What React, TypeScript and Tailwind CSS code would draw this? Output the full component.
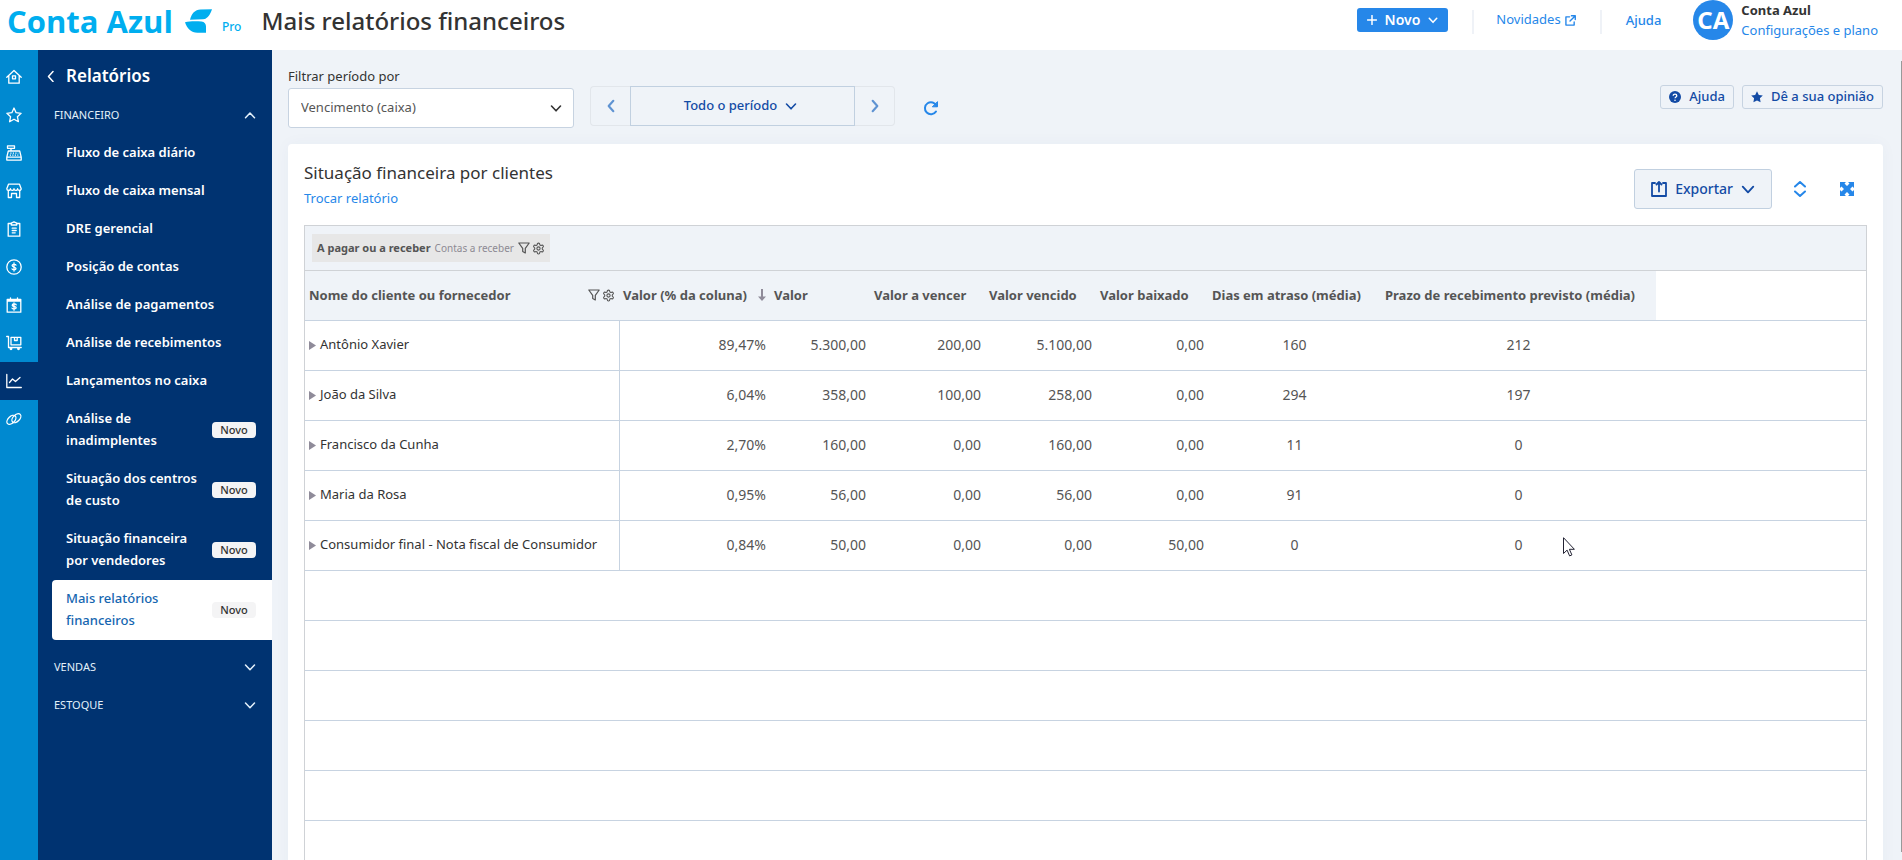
import type { ReactNode } from "react";
import { clsx } from "clsx";

const sections = ["VENDAS", "ESTOQUE"];

const reports = [
  { label: "Fluxo de caixa diário" },
  { label: "Fluxo de caixa mensal" },
  { label: "DRE gerencial" },
  { label: "Posição de contas" },
  { label: "Análise de pagamentos" },
  { label: "Análise de recebimentos" },
  { label: "Lançamentos no caixa" },
  { label: "Análise de inadimplentes", isNew: true },
  { label: "Situação dos centros de custo", isNew: true },
  { label: "Situação financeira por vendedores", isNew: true },
  { label: "Mais relatórios financeiros", isNew: true, active: true },
];

const rows = [
  ["Antônio Xavier", "89,47%", "5.300,00", "200,00", "5.100,00", "0,00", "160", "212"],
  ["João da Silva", "6,04%", "358,00", "100,00", "258,00", "0,00", "294", "197"],
  ["Francisco da Cunha", "2,70%", "160,00", "0,00", "160,00", "0,00", "11", "0"],
  ["Maria da Rosa", "0,95%", "56,00", "0,00", "56,00", "0,00", "91", "0"],
  ["Consumidor final - Nota fiscal de Consumidor", "0,84%", "50,00", "0,00", "0,00", "50,00", "0", "0"],
];

type IconProps = { children: ReactNode; size?: number; width?: number; box?: number };

function Icon({ children, size = 16, width = 1.5, box = 16 }: IconProps) {
  return (
    <svg
      width={size}
      height={size}
      viewBox={`0 0 ${box} ${box}`}
      fill="none"
      stroke="currentColor"
      strokeWidth={width}
      strokeLinecap="round"
      strokeLinejoin="round"
      className="shrink-0"
      aria-hidden="true"
    >
      {children}
    </svg>
  );
}

const ChevronDown = ({ size = 12, width = 1.5 }: { size?: number; width?: number }) => (
  <Icon size={size} box={12} width={width}>
    <path d="M1.5 4 6 8.8 10.5 4" />
  </Icon>
);

const Funnel = () => (
  <Icon size={12} box={12} width={1.2}>
    <path d="M.8 1h10.4L7.3 6.3V11L4.7 9.5V6.3z" />
  </Icon>
);

const Gear = () => (
  <Icon size={13} box={24} width={2}>
    <path d="M12.22 2h-.44a2 2 0 0 0-2 2v.18a2 2 0 0 1-1 1.73l-.43.25a2 2 0 0 1-2 0l-.15-.08a2 2 0 0 0-2.73.73l-.22.38a2 2 0 0 0 .73 2.73l.15.1a2 2 0 0 1 1 1.72v.51a2 2 0 0 1-1 1.74l-.15.09a2 2 0 0 0-.73 2.73l.22.38a2 2 0 0 0 2.73.73l.15-.08a2 2 0 0 1 2 0l.43.25a2 2 0 0 1 1 1.73V20a2 2 0 0 0 2 2h.44a2 2 0 0 0 2-2v-.18a2 2 0 0 1 1-1.73l.43-.25a2 2 0 0 1 2 0l.15.08a2 2 0 0 0 2.73-.73l.22-.39a2 2 0 0 0-.73-2.73l-.15-.08a2 2 0 0 1-1-1.74v-.5a2 2 0 0 1 1-1.74l.15-.09a2 2 0 0 0 .73-2.73l-.22-.38a2 2 0 0 0-2.73-.73l-.15.08a2 2 0 0 1-2 0l-.43-.25a2 2 0 0 1-1-1.73V4a2 2 0 0 0-2-2z" />
    <circle cx="12" cy="12" r="3" />
  </Icon>
);

const railItems: { label: string; active?: boolean; icon: ReactNode }[] = [
  {
    label: "Início",
    icon: (
      <>
        <path d="M.8 8.2 8 1.5l7.2 6.7M2.8 6.8v7.4h10.4V6.8" />
        <rect x="6.5" y="6.8" width="3" height="3" />
      </>
    ),
  },
  { label: "Favoritos", icon: <path d="M8 1l2.1 4.7 5 .6-3.7 3.4 1 5L8 12.2l-4.4 2.5 1-5L.9 6.300l5-.6z" /> },
  {
    label: "Vendas",
    icon: (
      <>
        <path d="M1.5.8h7v2.5h-7zM5 3.3V6M2.3 6h11.4l1.5 6.2v2.9H.8v-2.9zM.8 12.2h14.4" />
        <path d="M4.3 8.2h8M3.8 10.2h8.5" strokeDasharray="1.2 1.3" strokeLinecap="butt" />
      </>
    ),
  },
  {
    label: "Compras",
    icon: (
      <>
        <path d="M2.5 1.2h11l1.7 4.5c0 2.200-3.600 2.200-3.600 0 0 2.200-3.600 2.200-3.600 0 0 2.200-3.600 2.200-3.600 0 0 2.200-3.600 2.200-3.600 0z" />
        <path d="M2.3 7.5v7h3.2v-4h5v4h3.2v-7" />
      </>
    ),
  },
  {
    label: "Cadastros",
    icon: (
      <>
        <path d="M5 2.5H2.2v12.7h11.6V2.5H11" />
        <path d="M5.3 4V2.2L8 .8l2.7 1.4V4zM6.2 7.2h4M6.2 9.5h4M6.2 11.8h3" />
      </>
    ),
  },
  {
    label: "Financeiro",
    icon: (
      <>
        <circle cx="8" cy="8" r="7.2" />
        <path d="M10 6.2c-.3-1.2-3.9-1.3-3.9.4S10 7.8 10 9.500s-3.700 1.500-4 .3M8 4v8" />
      </>
    ),
  },
  {
    label: "Cobranças",
    icon: (
      <>
        <path d="M1.2 2.5h13.6v12.7H1.2zM1.2 4h13.6M4.5.8v3M11.5.8v3" />
        <path d="M10.2 7.8c-.3-1.2-4-1.2-4 .4s4 1 4 2.600-3.900 1.400-4.200.3M8 6v7.2" />
      </>
    ),
  },
  {
    label: "Estoque",
    icon: (
      <>
        <path d="M.7 1.5h1.800v11h12.700" />
        <path d="M5 2.3h9.8v7.5H5zM8.5 2.3v3.2h2.7V2.3" />
        <circle cx="5" cy="13.7" r=".8" />
        <circle cx="12.5" cy="13.7" r=".8" />
      </>
    ),
  },
  { label: "Relatórios", active: true, icon: <path d="M.8 1.5v13h14.5M3.5 9.5 6.5 6l3 2.5L14 4.5" /> },
  {
    label: "Integrações",
    icon: (
      <>
        <ellipse cx="5.4" cy="8.8" rx="5.4" ry="3.3" transform="rotate(-45 5.4 8.8)" />
        <ellipse cx="10.4" cy="7.2" rx="5.4" ry="3.3" transform="rotate(-45 10.4 7.2)" />
      </>
    ),
  },
];

function TopBar() {
  return (
    <header className="flex h-[50px] items-start bg-white">
      <a href="#" className="flex items-start pl-[7px] pt-[3px] text-[#00aeef]">
        <span className="font-['Open_Sans'] text-[31px] font-bold leading-9">Conta Azul</span>
        <svg width="27" height="24" viewBox="0 0 27 24" className="ml-3 mt-1.5" fill="currentColor" aria-hidden="true">
          <path d="M5 10.7C6.5 4.5 10 .5 15.5.4L27 .2C25.5 5 22.5 9.8 18 10.3z" />
          <path d="M0 13.3C5 11.9 12 12.3 16.5 12.5c3 .3 4.5 2.5 4.5 5v6.2h-8.5C6 23.7 2 19.5 0 13.3z" />
        </svg>
        <span className="ml-2.5 mt-4 text-xs font-medium leading-4">Pro</span>
      </a>
      <h1 className="ml-5 mt-[3px] text-2xl font-medium leading-9 text-[#333]">Mais relatórios financeiros</h1>
      <div className="ml-auto flex items-start pr-6">
        <button className="mt-2 flex h-6 items-center gap-2 rounded-[3px] bg-[#2687e9] px-2.5 text-sm font-semibold text-white">
          <Icon size={10} box={10}>
            <path d="M5 .5v9M.5 5h9" />
          </Icon>
          Novo
          <ChevronDown size={10} width={1.8} />
        </button>
        <span className="ml-6 mt-2.5 h-6 w-0.5 bg-[#eff2f7]" />
        <a href="#" className="ml-[22px] mt-2 flex h-6 items-center gap-1 text-[13px] text-[#2687e9]">
          Novidades
          <Icon size={11} box={12}>
            <path d="M5 2H1v9h9V7.5M7 .8h4.2V5M11 1 5.5 6.5" />
          </Icon>
        </a>
        <span className="ml-6 mt-2.5 h-6 w-0.5 bg-[#eff2f7]" />
        <a href="#" className="ml-6 mt-2 text-[13px] font-medium leading-6 text-[#2687e9]">Ajuda</a>
        <span className="ml-8 flex size-10 items-center justify-center rounded-full bg-[#2687e9] text-2xl font-bold text-white">CA</span>
        <div className="ml-2 flex flex-col text-[13px] leading-5">
          <strong className="font-bold text-[#333]">Conta Azul</strong>
          <a href="#" className="text-[#2687e9]">Configurações e plano</a>
        </div>
      </div>
    </header>
  );
}

function Rail() {
  return (
    <nav aria-label="Principal" className="w-[38px] shrink-0 bg-[#0089d0] pt-2 text-white">
      {railItems.map((item) => (
        <a
          key={item.label}
          href="#"
          aria-label={item.label}
          className={clsx("flex h-[38px] items-center pl-1.5", item.active && "bg-[#003371]")}
        >
          <Icon width={1.3}>{item.icon}</Icon>
        </a>
      ))}
    </nav>
  );
}

function Sidebar() {
  return (
    <nav aria-label="Relatórios" className="w-[234px] shrink-0 bg-[#003371] pt-2 text-white">
      <a href="#" className="flex h-[38px] items-center gap-2 pb-0.5 pl-2 text-[17px] font-semibold">
        <Icon size={12} box={12}>
          <path d="M7 1.5 2.5 6.5 7 11.5" />
        </Icon>
        Relatórios
      </a>
      <button className="flex h-[38px] w-full items-center justify-between px-4 text-[11px] text-[#e3f1fb]">
        FINANCEIRO
        <Icon size={12} box={12}>
          <path d="M1.5 8.8 6 4l4.5 4.8" />
        </Icon>
      </button>
      <ul className="mb-2">
        {reports.map((report) => (
          <li key={report.label}>
            <a
              href="#"
              className={clsx(
                "ml-3.5 flex items-center justify-between rounded-l pl-3.5 pr-4 text-[13px] leading-[22px]",
                report.isNew ? "h-[60px]" : "h-[38px]",
                report.active ? "bg-white font-medium text-[#1566b0]" : "font-semibold"
              )}
            >
              <span className={clsx("pb-0.5", report.isNew && "w-[136px]")}>{report.label}</span>
              {report.isNew && (
                <span className="flex h-4 w-11 items-center justify-center rounded bg-[#f4f4f5] text-[11px] font-medium text-[#333]">
                  Novo
                </span>
              )}
            </a>
          </li>
        ))}
      </ul>
      {sections.map((section) => (
        <button key={section} className="flex h-[38px] w-full items-center justify-between px-4 text-[11px] text-[#e3f1fb]">
          {section}
          <ChevronDown />
        </button>
      ))}
    </nav>
  );
}

function Filters() {
  return (
    <div className="flex items-start">
      <div className="flex flex-col">
        <label htmlFor="period-type" className="pb-0.5 text-[13px] leading-5 text-[#333]">Filtrar período por</label>
        <div className="relative">
          <select
            id="period-type"
            className="h-10 w-[286px] appearance-none rounded-[3px] border border-[#c7d3e1] bg-white px-3 text-[13px] text-[#555]"
          >
            <option>Vencimento (caixa)</option>
          </select>
          <span className="pointer-events-none absolute right-3 top-3.5 text-[#333]">
            <ChevronDown width={1.6} />
          </span>
        </div>
      </div>
      <div className="ml-4 mt-5 flex h-10 text-[#134ba5]">
        <button aria-label="Período anterior" className="flex w-10 items-center justify-center rounded-l border border-r-0 border-[#e2e6eb] text-[#5f93d2]">
          <Icon size={14} box={12} width={1.8}>
            <path d="M8 1.5 4 6l4 4.5" />
          </Icon>
        </button>
        <button className="flex w-[225px] items-center justify-center gap-2 border border-[#c1d0e0] pr-1 text-[13px] font-medium">
          Todo o período
          <ChevronDown width={1.6} />
        </button>
        <button aria-label="Próximo período" className="flex w-10 items-center justify-center rounded-r border border-l-0 border-[#e2e6eb] text-[#5f93d2]">
          <Icon size={14} box={12} width={1.8}>
            <path d="M4 1.5 8 6l-4 4.5" />
          </Icon>
        </button>
      </div>
      <button aria-label="Atualizar" className="ml-7 mt-[34px] text-[#2687e9]">
        <Icon width={2}>
          <path d="M13.5 6A6 6 0 1 0 13 11.5" />
          <path d="M14.5 2v4.8H9.7z" fill="currentColor" strokeWidth="1" />
        </Icon>
      </button>
      <div className="ml-auto mt-[19px] flex gap-2 text-[13px] font-medium text-[#134ba5]">
        <button className="flex h-6 items-center gap-2 rounded-[3px] border border-[#c7d3e1] px-2">
          <svg width="12" height="12" viewBox="0 0 12 12" aria-hidden="true">
            <circle cx="6" cy="6" r="6" fill="currentColor" />
            <path d="M4.2 4.7c0-2.2 3.6-2.2 3.6 0C7.8 6 6 5.9 6 7.3" fill="none" stroke="#fff" strokeWidth="1.3" />
            <circle cx="6" cy="9.2" r=".8" fill="#fff" />
          </svg>
          Ajuda
        </button>
        <button className="flex h-6 items-center gap-2 rounded-[3px] border border-[#c7d3e1] px-2">
          <svg width="12" height="12" viewBox="0 0 12 12" fill="currentColor" aria-hidden="true">
            <path d="M6 .3l1.8 3.7 4 .5-2.9 2.8.7 4L6 9.4l-3.6 1.9.7-4L.2 4.5l4-.5z" />
          </svg>
          Dê a sua opinião
        </button>
      </div>
    </div>
  );
}

const th = "h-[49px] bg-[#eff3f8] px-1 text-left font-bold whitespace-nowrap";

function ReportTable() {
  return (
    <div className="mt-[15px] border border-b-0 border-[#cfd2d6]">
      <div className="flex h-[45px] items-center border-b border-[#cfd2d6] bg-[#eff3f8] px-[7px]">
        <div className="flex h-7 items-center bg-[#e7e7e7] px-[5px] text-[#555]">
          <span className="text-[11px] font-bold">A pagar ou a receber</span>
          <span className="mx-1 text-[10px] text-[#8d8a94]">Contas a receber</span>
          <button aria-label="Filtrar contas"><Funnel /></button>
          <button aria-label="Configurar contas" className="ml-0.5"><Gear /></button>
        </div>
      </div>
      <table className="w-full table-fixed border-collapse text-[13px] text-[#555]">
        <colgroup>
          <col className="w-[314px]" />
          <col className="w-[151px]" />
          <col className="w-[100px]" />
          <col className="w-[115px]" />
          <col className="w-[111px]" />
          <col className="w-[112px]" />
          <col className="w-[173px]" />
          <col className="w-[275px]" />
          <col />
        </colgroup>
        <thead>
          <tr className="border-b border-[#c7d3e1]">
            <th className={th}>
              <div className="flex items-center">
                Nome do cliente ou fornecedor
                <button aria-label="Filtrar clientes" className="ml-auto"><Funnel /></button>
                <button aria-label="Configurar clientes" className="ml-0.5"><Gear /></button>
              </div>
            </th>
            <th className={th}>
              <div className="flex items-center justify-between">
                Valor (% da coluna)
                <svg width="8" height="12" viewBox="0 0 8 12" fill="#8f8b99" aria-hidden="true">
                  <path d="M3 0h2v7.500h3L4 12 0 7.500h3z" />
                </svg>
              </div>
            </th>
            <th className={th}>Valor</th>
            <th className={th}>Valor a vencer</th>
            <th className={th}>Valor vencido</th>
            <th className={th}>Valor baixado</th>
            <th className={th}>Dias em atraso (média)</th>
            <th className={th}>Prazo de recebimento previsto (média)</th>
            <td />
          </tr>
        </thead>
        <tbody>
          {rows.map(([name, ...values]) => (
            <tr key={name} className="h-[50px] border-b border-[#c7d3e1]">
              <th scope="row" className="whitespace-nowrap border-r border-[#c7d3e1] px-1 text-left font-normal text-[#333]">
                <button className="flex items-center gap-1">
                  <svg width="7" height="9" viewBox="0 0 7 9" fill="#8f8b99" aria-hidden="true">
                    <path d="M0 0l7 4.5L0 9z" />
                  </svg>
                  {name}
                </button>
              </th>
              {values.map((value, i) => (
                <td key={i} className={clsx("px-1 text-sm", i < 5 ? "text-right" : "text-center")}>{value}</td>
              ))}
              <td />
            </tr>
          ))}
          {[1, 2, 3, 4, 5, 6].map((n) => (
            <tr key={n} className="h-[50px] border-b border-[#c7d3e1]">
              <td colSpan={9} />
            </tr>
          ))}
        </tbody>
      </table>
    </div>
  );
}

function ReportCard() {
  return (
    <section className="mt-4 flex-1 rounded-t bg-white px-4 pt-4 shadow-[0_0_16px_rgba(60,80,120,0.04)]">
      <div className="flex items-center justify-between">
        <div>
          <h2 className="text-[17px] leading-[26px] text-[#333]">Situação financeira por clientes</h2>
          <a href="#" className="block text-[13px] leading-6 text-[#2687e9]">Trocar relatório</a>
        </div>
        <div className="flex items-center pr-[13px] pt-2">
          <button className="flex h-10 items-center gap-2 rounded-[3px] border border-[#c1d0e0] bg-[#eff3f8] px-4 text-sm font-medium text-[#134ba5]">
            <Icon width={1.8}>
              <path d="M4 2H1v13h14V2h-3M8 10.5V1M5.5 3.500 8 1l2.500 2.500" />
            </Icon>
            Exportar
            <ChevronDown size={14} width={1.6} />
          </button>
          <button aria-label="Expandir linhas" className="ml-5 text-[#2687e9]">
            <Icon width={2}>
              <path d="M3 5.5 8 1l5 4.5M3 10.5 8 15l5-4.5" />
            </Icon>
          </button>
          <button aria-label="Tela cheia" className="ml-8 text-[#2687e9]">
            <svg width="14" height="14" viewBox="0 0 14 14" fill="currentColor" aria-hidden="true">
              <path d="M0 0h6L4.5 1.5 7 4l2.5-2.5L8 0h6v6l-1.5-1.5L10 7l2.5 2.5L14 8v6H8l1.5-1.5L7 10l-2.5 2.5L6 14H0V8l1.5 1.5L4 7 1.5 4.5 0 6z" />
            </svg>
          </button>
        </div>
      </div>
      <ReportTable />
    </section>
  );
}

export default function App() {
  return (
    <div className="relative flex h-screen flex-col overflow-hidden font-['Noto_Sans',sans-serif]">
      <TopBar />
      <div className="flex min-h-0 flex-1">
        <Rail />
        <Sidebar />
        <main className="flex min-w-0 flex-1 flex-col bg-[#eff3f8] pl-4 pr-[19px] pt-4">
          <Filters />
          <ReportCard />
        </main>
      </div>
      {/* scroll thumb */}
      <div className="absolute bottom-2 right-0 top-[61px] w-px bg-[#999]" />
      {/* mouse pointer */}
      <svg width="12" height="20" viewBox="0 0 12 20" className="absolute left-[1563px] top-[537px]" aria-hidden="true">
        <path d="M.5.7v15.8l3.6-3.4 2.5 5.8 2.3-1-2.5-5.6h5z" fill="#fff" stroke="#223" />
      </svg>
    </div>
  );
}
